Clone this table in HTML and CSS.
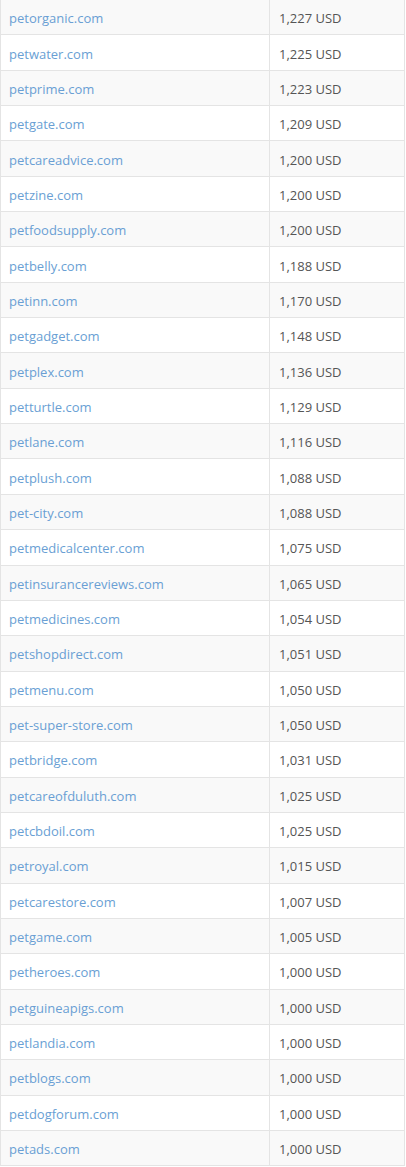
FILE: index.html
```html
<!DOCTYPE html>
<html>
<head>
<meta charset="utf-8">
<link rel="stylesheet" href="styles.css">
</head>
<body>
<table class="domains">
<tbody>
<tr><td class="name"><a href="#">petorganic.com</a></td><td class="price">1,227 USD</td></tr>
<tr><td class="name"><a href="#">petwater.com</a></td><td class="price">1,225 USD</td></tr>
<tr><td class="name"><a href="#">petprime.com</a></td><td class="price">1,223 USD</td></tr>
<tr><td class="name"><a href="#">petgate.com</a></td><td class="price">1,209 USD</td></tr>
<tr><td class="name"><a href="#">petcareadvice.com</a></td><td class="price">1,200 USD</td></tr>
<tr><td class="name"><a href="#">petzine.com</a></td><td class="price">1,200 USD</td></tr>
<tr><td class="name"><a href="#">petfoodsupply.com</a></td><td class="price">1,200 USD</td></tr>
<tr><td class="name"><a href="#">petbelly.com</a></td><td class="price">1,188 USD</td></tr>
<tr><td class="name"><a href="#">petinn.com</a></td><td class="price">1,170 USD</td></tr>
<tr><td class="name"><a href="#">petgadget.com</a></td><td class="price">1,148 USD</td></tr>
<tr><td class="name"><a href="#">petplex.com</a></td><td class="price">1,136 USD</td></tr>
<tr><td class="name"><a href="#">petturtle.com</a></td><td class="price">1,129 USD</td></tr>
<tr><td class="name"><a href="#">petlane.com</a></td><td class="price">1,116 USD</td></tr>
<tr><td class="name"><a href="#">petplush.com</a></td><td class="price">1,088 USD</td></tr>
<tr><td class="name"><a href="#">pet-city.com</a></td><td class="price">1,088 USD</td></tr>
<tr><td class="name"><a href="#">petmedicalcenter.com</a></td><td class="price">1,075 USD</td></tr>
<tr><td class="name"><a href="#">petinsurancereviews.com</a></td><td class="price">1,065 USD</td></tr>
<tr><td class="name"><a href="#">petmedicines.com</a></td><td class="price">1,054 USD</td></tr>
<tr><td class="name"><a href="#">petshopdirect.com</a></td><td class="price">1,051 USD</td></tr>
<tr><td class="name"><a href="#">petmenu.com</a></td><td class="price">1,050 USD</td></tr>
<tr><td class="name"><a href="#">pet-super-store.com</a></td><td class="price">1,050 USD</td></tr>
<tr><td class="name"><a href="#">petbridge.com</a></td><td class="price">1,031 USD</td></tr>
<tr><td class="name"><a href="#">petcareofduluth.com</a></td><td class="price">1,025 USD</td></tr>
<tr><td class="name"><a href="#">petcbdoil.com</a></td><td class="price">1,025 USD</td></tr>
<tr><td class="name"><a href="#">petroyal.com</a></td><td class="price">1,015 USD</td></tr>
<tr><td class="name"><a href="#">petcarestore.com</a></td><td class="price">1,007 USD</td></tr>
<tr><td class="name"><a href="#">petgame.com</a></td><td class="price">1,005 USD</td></tr>
<tr><td class="name"><a href="#">petheroes.com</a></td><td class="price">1,000 USD</td></tr>
<tr><td class="name"><a href="#">petguineapigs.com</a></td><td class="price">1,000 USD</td></tr>
<tr><td class="name"><a href="#">petlandia.com</a></td><td class="price">1,000 USD</td></tr>
<tr><td class="name"><a href="#">petblogs.com</a></td><td class="price">1,000 USD</td></tr>
<tr><td class="name"><a href="#">petdogforum.com</a></td><td class="price">1,000 USD</td></tr>
<tr><td class="name"><a href="#">petads.com</a></td><td class="price">1,000 USD</td></tr>
</tbody>
</table>
</body>
</html>
```
FILE: styles.css
```css
html, body {
  margin: 0;
  padding: 0;
  background: #ffffff;
}
body {
  font-family: "Open Sans", "Liberation Sans", sans-serif;
  font-size: 13px;
  color: #555555;
  overflow: hidden;
}
.domains {
  width: 405px;
  border-collapse: collapse;
  table-layout: fixed;
  margin-top: -1px;
}
.domains tr:nth-child(odd) td {
  background: #f9f9f9;
}
.domains td {
  height: 35.35px;
  box-sizing: border-box;
  padding: 2px 9px 0;
  border: 1px solid #e4e4e4;
  line-height: 18px;
  vertical-align: middle;
}
.domains td.name {
  width: 269px;
  padding-left: 8px;
}
.domains td.price {
  padding-left: 9px;
}
.domains a {
  color: #6a9fd4;
  text-decoration: none;
}
```
